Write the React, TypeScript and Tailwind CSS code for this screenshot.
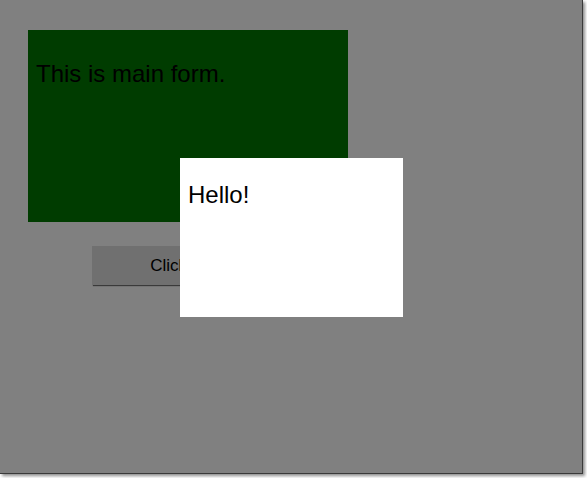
export default function App() {
  return (
    <div className="w-[587px] h-[478px] bg-white font-['Liberation_Sans',Arial,sans-serif]">
      <div className="relative w-[583px] h-[474px] bg-[#808080] border-r border-b border-[#3a3a3a] shadow-[2px_2px_3px_rgba(0,0,0,0.45)]">
        <div className="pt-[30px] pl-[28px] flex flex-col items-start">
          <div className="w-[320px] h-[192px] bg-[#003c00] pl-[8px] pt-[30px]">
            <p className="text-[24px] leading-[28px] text-black">This is main form.</p>
          </div>
          <button className="mt-[24px] ml-[64px] w-[192px] h-[39px] bg-[#707070] text-[17px] text-black shadow-[1px_1px_1px_rgba(0,0,0,0.55)]">
            Click here
          </button>
        </div>

        <div className="absolute left-[180px] top-[158px] w-[223px] h-[159px] bg-white pl-[8px] pt-[23px]">
          <p className="text-[24px] leading-[28px] text-black">Hello!</p>
        </div>
      </div>
    </div>
  )
}
